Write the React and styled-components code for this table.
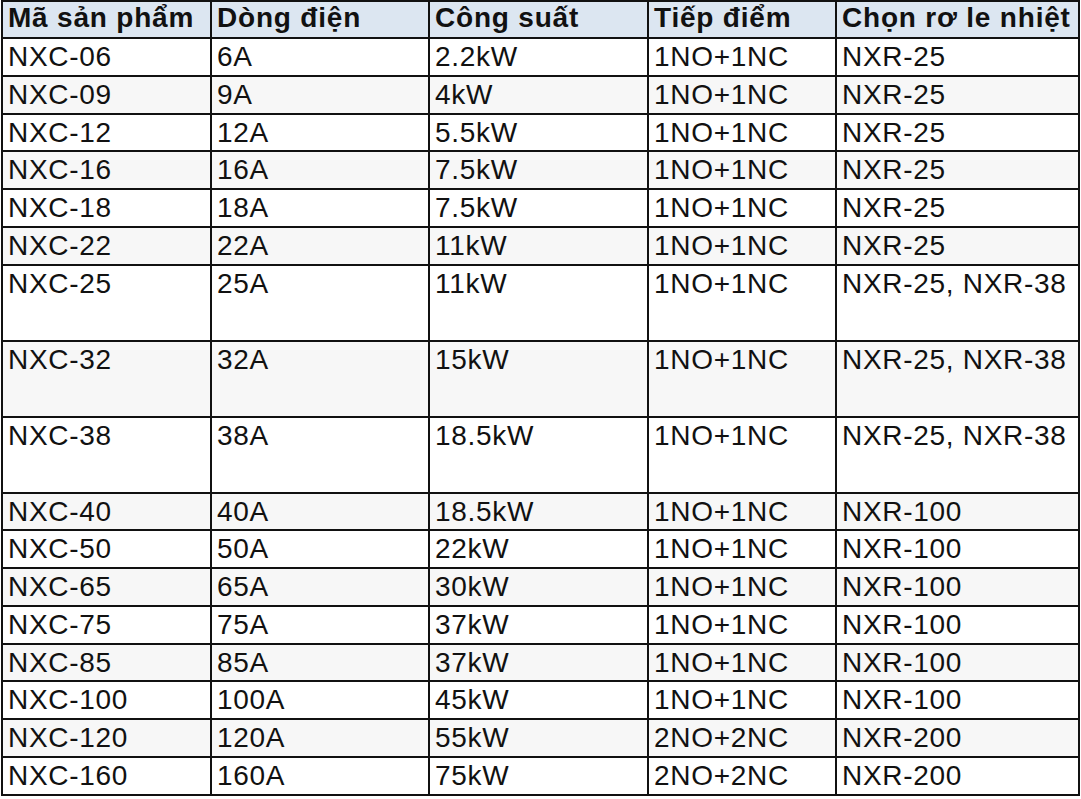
import styled, { createGlobalStyle } from 'styled-components';

const GlobalStyle = createGlobalStyle`
  body {
    margin: 0;
    background: #ffffff;
    font-family: 'Liberation Sans', Arial, sans-serif;
  }
`;

const Table = styled.table`
  border-collapse: collapse;
  table-layout: fixed;
  width: 1077px;
  margin: 0 0 0 1px;
  font-family: 'Liberation Sans', Arial, sans-serif;
  font-size: 28px;
  letter-spacing: 0.7px;
  color: #111;
`;

const HeadRow = styled.tr`
  background: #dce6f1;
  height: 37px;
`;

const Th = styled.th`
  border: 2px solid #111;
  text-align: left;
  font-weight: bold;
  vertical-align: top;
  padding: 0 4px 0 5px;
  line-height: 32px;
  letter-spacing: 0.8px;
  white-space: nowrap;
  overflow: hidden;
`;

const Row = styled.tr`
  background: ${p => (p.$shaded ? '#f7f7f7' : '#ffffff')};
  height: ${p => (p.$tall ? '76px' : '37.75px')};
`;

const Td = styled.td`
  border: 2px solid #111;
  text-align: left;
  vertical-align: top;
  padding: 2px 4px 0 5px;
  line-height: 32px;
  white-space: nowrap;
  overflow: hidden;
`;

const cols = [
  { label: 'Mã sản phẩm', width: 209 },
  { label: 'Dòng điện', width: 218 },
  { label: 'Công suất', width: 219 },
  { label: 'Tiếp điểm', width: 188 },
  { label: 'Chọn rơ le nhiệt', width: 243 },
];

const rows = [
  ['NXC-06', '6A', '2.2kW', '1NO+1NC', 'NXR-25'],
  ['NXC-09', '9A', '4kW', '1NO+1NC', 'NXR-25'],
  ['NXC-12', '12A', '5.5kW', '1NO+1NC', 'NXR-25'],
  ['NXC-16', '16A', '7.5kW', '1NO+1NC', 'NXR-25'],
  ['NXC-18', '18A', '7.5kW', '1NO+1NC', 'NXR-25'],
  ['NXC-22', '22A', '11kW', '1NO+1NC', 'NXR-25'],
  ['NXC-25', '25A', '11kW', '1NO+1NC', 'NXR-25, NXR-38', true],
  ['NXC-32', '32A', '15kW', '1NO+1NC', 'NXR-25, NXR-38', true],
  ['NXC-38', '38A', '18.5kW', '1NO+1NC', 'NXR-25, NXR-38', true],
  ['NXC-40', '40A', '18.5kW', '1NO+1NC', 'NXR-100'],
  ['NXC-50', '50A', '22kW', '1NO+1NC', 'NXR-100'],
  ['NXC-65', '65A', '30kW', '1NO+1NC', 'NXR-100'],
  ['NXC-75', '75A', '37kW', '1NO+1NC', 'NXR-100'],
  ['NXC-85', '85A', '37kW', '1NO+1NC', 'NXR-100'],
  ['NXC-100', '100A', '45kW', '1NO+1NC', 'NXR-100'],
  ['NXC-120', '120A', '55kW', '2NO+2NC', 'NXR-200'],
  ['NXC-160', '160A', '75kW', '2NO+2NC', 'NXR-200'],
];

export default function App() {
  return (
    <>
      <GlobalStyle />
      <Table>
        <colgroup>
          {cols.map(c => (
            <col key={c.label} style={{ width: c.width }} />
          ))}
        </colgroup>
        <thead>
          <HeadRow>
            {cols.map(c => (
              <Th key={c.label}>{c.label}</Th>
            ))}
          </HeadRow>
        </thead>
        <tbody>
          {rows.map((r, i) => (
            <Row key={r[0]} $shaded={i % 2 === 1} $tall={r[5]}>
              {r.slice(0, 5).map((v, j) => (
                <Td key={j}>{v}</Td>
              ))}
            </Row>
          ))}
        </tbody>
      </Table>
    </>
  );
}
